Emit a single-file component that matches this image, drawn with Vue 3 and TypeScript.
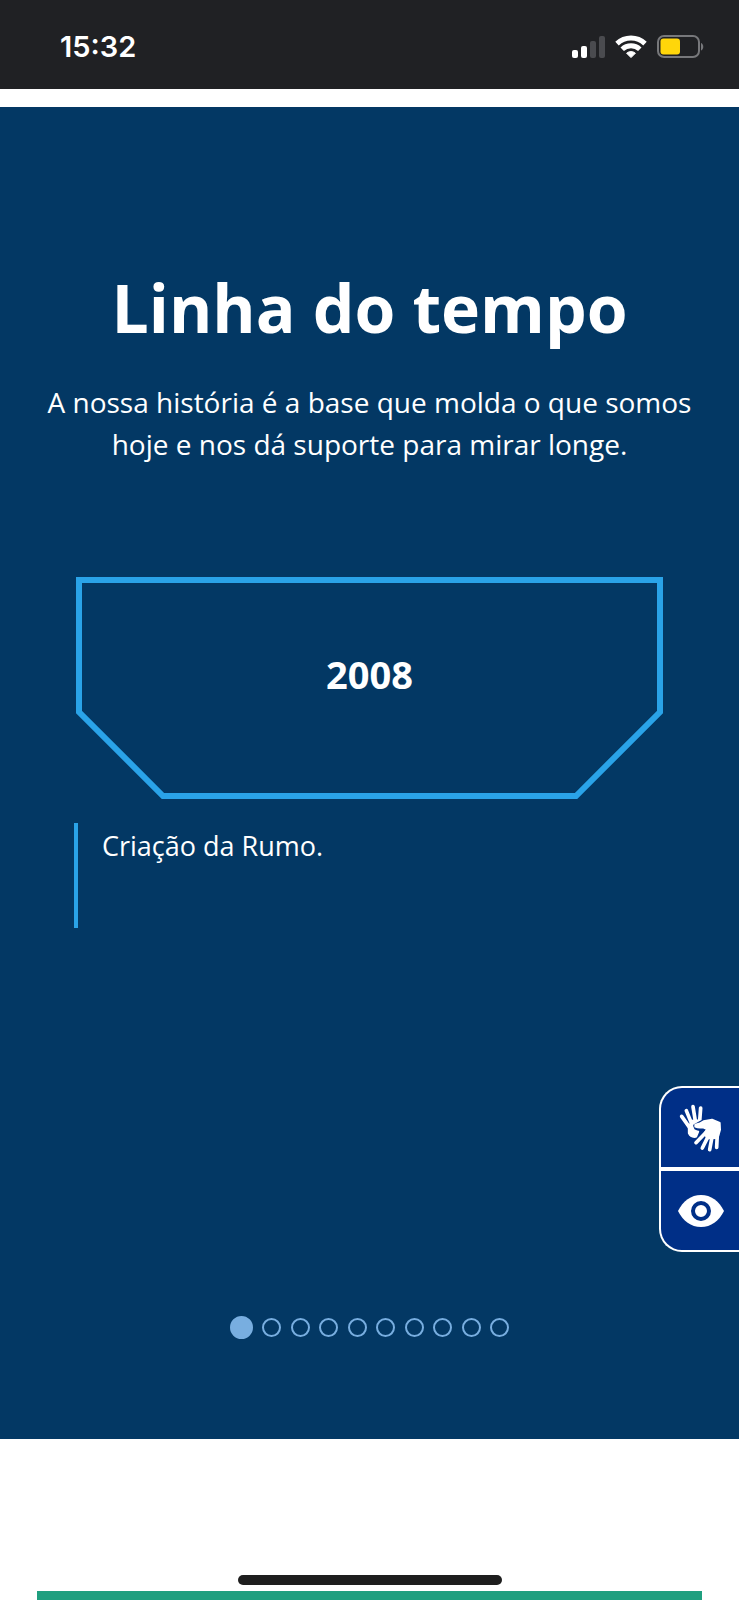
<script setup lang="ts">
import { ref } from 'vue'

interface Milestone {
  year: string
  text: string
}

const milestone: Milestone = { year: '2008', text: 'Criação da Rumo.' }
const slideCount = 10
const active = ref(1)
</script>

<template>
  <div class="page">
    <header class="status">
      <span class="clock">15:32</span>
      <div class="indicators">
        <svg width="33" height="24" viewBox="0 0 33 24" aria-hidden="true">
          <rect x="0" y="15" width="6" height="8" rx="2" fill="#fff" />
          <rect x="9" y="11" width="6" height="12" rx="2" fill="#fff" />
          <rect x="18" y="6" width="6" height="17" rx="2" fill="#4a4b4f" />
          <rect x="27" y="1" width="6" height="22" rx="2" fill="#4a4b4f" />
        </svg>
        <svg width="32" height="24" viewBox="0 0 32 24" aria-hidden="true">
          <g fill="none" stroke="#fff" stroke-width="5">
            <path d="M2 8.600a20.3 20.3 0 0 1 28 0" />
            <path d="M7.200 14.200a12.800 12.800 0 0 1 17.600 0" />
          </g>
          <path d="M11.600 18.200a6.800 6.800 0 0 1 8.800 0L16 22.600z" fill="#fff" stroke="#fff" stroke-width="1" stroke-linejoin="round" />
        </svg>
        <svg width="47" height="24" viewBox="0 0 47 24" aria-hidden="true">
          <rect x="1" y="1" width="41" height="21" rx="6" fill="none" stroke="#77787b" stroke-width="2" />
          <rect x="3.500" y="3.500" width="19.500" height="16" rx="3" fill="#ffd60a" />
          <path d="M44 8c3 1 3 6.500 0 7.500z" fill="#77787b" />
        </svg>
      </div>
    </header>

    <main class="timeline">
      <h1>Linha do tempo</h1>
      <p class="intro">A nossa história é a base que molda o que somos hoje e nos dá suporte para mirar longe.</p>

      <article class="milestone">
        <div class="plate">
          <svg viewBox="0 0 587 222" aria-hidden="true">
            <path d="M3 3H584V135L500 219H87L3 135Z" fill="none" stroke="#2aa3e8" stroke-width="6" />
          </svg>
          <h2>{{ milestone.year }}</h2>
        </div>
        <p class="event">{{ milestone.text }}</p>
      </article>

      <nav class="dots" aria-label="Marcos">
        <button
          v-for="n in slideCount"
          :key="n"
          type="button"
          class="dot"
          :class="{ current: n === active }"
          :aria-label="`Marco ${n}`"
          @click="active = n"
        ></button>
      </nav>

      <aside class="access">
        <button type="button" aria-label="Libras">
          <svg width="44" height="48" viewBox="118 101 132 144" aria-hidden="true">
            <g fill="#fff" stroke="#fff" stroke-linecap="round" stroke-linejoin="round">
              <path d="M126 138L150 172M140 121L158 165M160 109L168 158M183 113L180 152" stroke-width="11" />
              <path d="M149 168L160 152H183L170 166L174 184L168 198Q154 200 149 188Z" stroke-width="9" />
            </g>
            <path d="M165 166L192 151L215 145Q230 147 243 158L242 185L236 205L198 200L192 191L203 180L190 176Q178 180 168 174Z" fill="#002f87" stroke="#002f87" stroke-width="9" stroke-linejoin="round" />
            <g fill="#fff" stroke="#fff" stroke-linecap="round" stroke-linejoin="round">
              <path d="M169 217L198 187M188 233L207 195M210 238L218 195M231 231L233 190" stroke-width="11" />
              <path d="M167 163Q183 160 192 153L217 148L240 158L241 178L234 203L204 204L194 190L202 176L190 171Q176 173 167 169Z" stroke-width="6" />
            </g>
          </svg>
        </button>
        <button type="button" aria-label="Acessibilidade visual">
          <svg width="46" height="32" viewBox="0 0 46 32" aria-hidden="true">
            <path d="M0 16C5 6 13 0 23 0S41 6 46 16C41 26 33 32 23 32S5 26 0 16Z" fill="#fff" />
            <circle cx="23" cy="16" r="8" fill="#fff" stroke="#002f87" stroke-width="4" />
          </svg>
        </button>
      </aside>
    </main>

    <section class="next"></section>
    <div class="home-bar"></div>
  </div>
</template>

<style>
body {
  margin: 0;
  background: #fff;
}
</style>

<style scoped>
.page {
  position: relative;
  font-family: "Open Sans", "Noto Sans", sans-serif;
  color: #fff;
}
.status {
  box-sizing: border-box;
  height: 89px;
  padding: 5px 35px 0 60px;
  display: flex;
  align-items: center;
  justify-content: space-between;
  background: #202124;
}
.clock {
  font: 600 29px/36px Inter, sans-serif;
}
.indicators {
  display: flex;
  gap: 10px;
}
.timeline {
  position: relative;
  margin-top: 18px;
  padding: 160px 40px 100px;
  background: #033864;
}
h1,
h2,
p {
  margin: 0;
}
h1 {
  font-size: 66px;
  line-height: 80px;
  font-weight: 700;
  text-align: center;
}
.intro {
  margin-top: 34px;
  font-size: 28px;
  line-height: 42px;
  text-align: center;
}
.milestone {
  margin: 112px 34px 0;
}
.plate {
  display: grid;
  margin: 0 2px;
}
.plate > * {
  grid-area: 1 / 1;
}
.plate svg {
  display: block;
  width: 100%;
}
.plate h2 {
  align-self: center;
  padding-bottom: 28px;
  font-size: 38px;
  line-height: 52px;
  text-align: center;
}
.event {
  box-sizing: border-box;
  min-height: 105px;
  margin-top: 24px;
  padding: 5px 0 0 24px;
  border-left: 4px solid #2aa3e8;
  font-size: 27px;
  line-height: 36px;
}
.dots {
  display: flex;
  align-items: center;
  justify-content: space-between;
  width: 279px;
  margin: 388px auto 0;
}
.dot {
  box-sizing: border-box;
  width: 19px;
  height: 19px;
  padding: 0;
  border: 2px solid #78aee0;
  border-radius: 50%;
  background: transparent;
}
.dot.current {
  width: 23px;
  height: 23px;
  background: #78aee0;
}
.access {
  position: absolute;
  top: 979px;
  right: 0;
  display: grid;
  gap: 4px;
  box-sizing: border-box;
  width: 80px;
  border: 2px solid #fff;
  border-right: 0;
  border-radius: 23px 0 0 23px;
  overflow: hidden;
  background: #fff;
}
.access button {
  display: flex;
  align-items: center;
  justify-content: center;
  height: 79px;
  padding: 0 0 0 2px;
  border: 0;
  background: #002f87;
}
.next {
  height: 9px;
  margin: 152px 37px 0;
  background: #1f9f7f;
}
.home-bar {
  position: absolute;
  bottom: 15px;
  left: 50%;
  width: 264px;
  height: 10px;
  margin-left: -132px;
  border-radius: 5px;
  background: #1e1e1e;
}
</style>
